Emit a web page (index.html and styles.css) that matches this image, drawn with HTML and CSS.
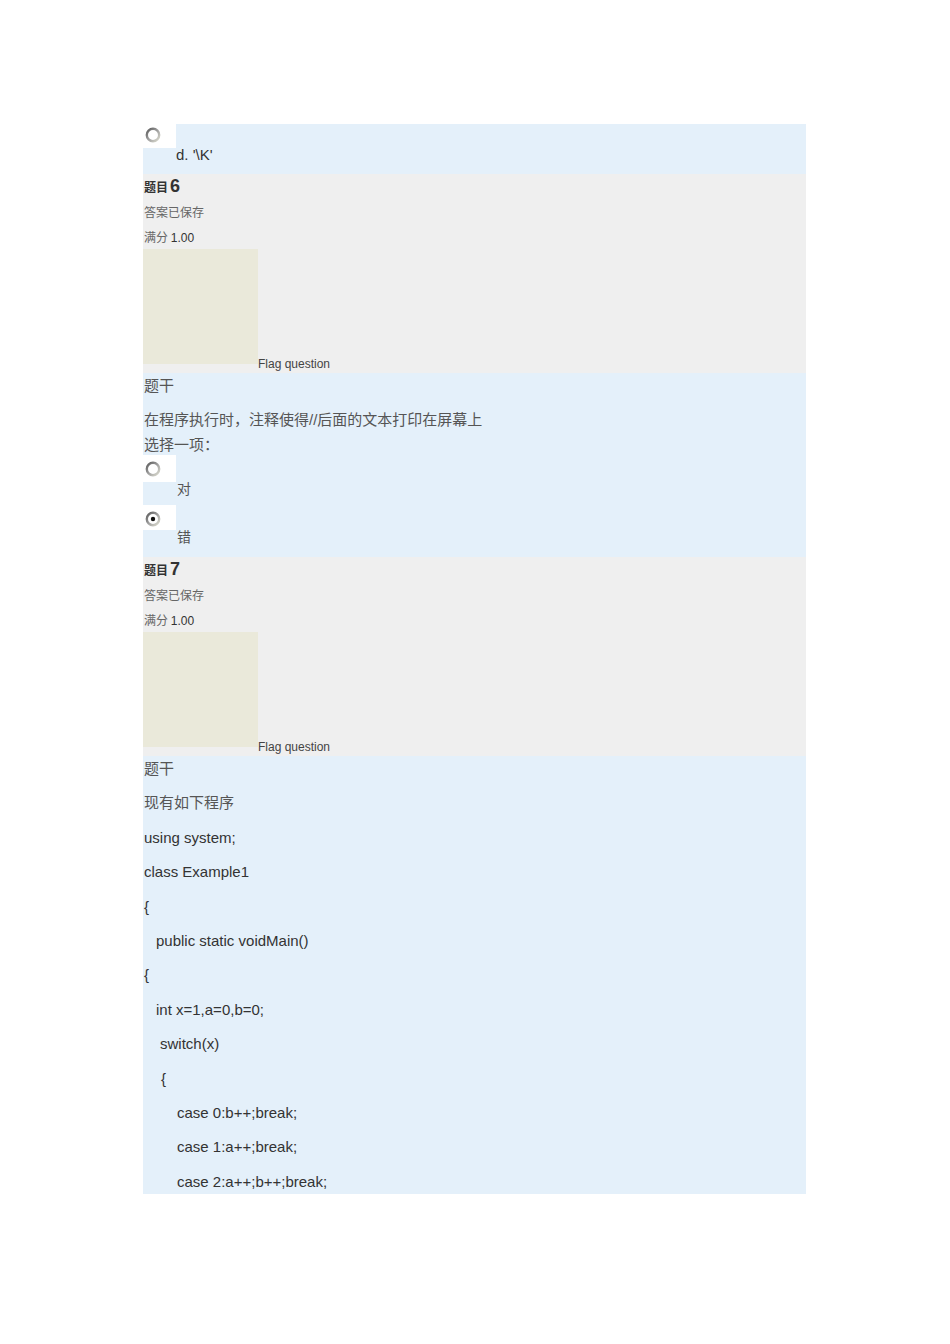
FILE: index.html
```html
<!DOCTYPE html>
<html lang="zh">
<head>
<meta charset="utf-8">
<title>Quiz</title>
<link rel="stylesheet" href="styles.css">
</head>
<body>
<div class="page">
  <div class="blue first">
    <div class="radio-box">
      <svg class="radio" viewBox="0 0 16 16" width="16" height="16"><defs><linearGradient id="g1" x1="0" y1="0" x2="1" y2="1"><stop offset="0" stop-color="#5a5a5a"/><stop offset="0.5" stop-color="#a0a0a0"/><stop offset="1" stop-color="#dcdcd0"/></linearGradient></defs><circle cx="8" cy="8" r="6.2" fill="#fff" stroke="url(#g1)" stroke-width="2.4"/></svg>
    </div>
    <div class="opt-text latin">d. '\K'</div>
  </div>

  <div class="grey">
    <div class="qno"><span class="qlabel">题目</span><span class="qnum">6</span></div>
    <div class="meta">答案已保存</div>
    <div class="meta">满分 <span class="latin dark">1.00</span></div>
    <div class="flag-row"><div class="flag-img"></div><span class="flag-text">Flag question</span></div>
  </div>

  <div class="blue q6">
    <div class="zh label">题干</div>
    <div class="zh qtext">在程序执行时，注释使得//后面的文本打印在屏幕上</div>
    <div class="zh choose">选择一项：</div>
    <div class="radio-box rb2">
      <svg class="radio" viewBox="0 0 16 16" width="16" height="16"><defs><linearGradient id="g2" x1="0" y1="0" x2="1" y2="1"><stop offset="0" stop-color="#5a5a5a"/><stop offset="0.5" stop-color="#a0a0a0"/><stop offset="1" stop-color="#dcdcd0"/></linearGradient></defs><circle cx="8" cy="8" r="6.2" fill="#fff" stroke="url(#g2)" stroke-width="2.4"/></svg>
    </div>
    <div class="zh opt-zh">对</div>
    <div class="radio-box rb3">
      <svg class="radio" viewBox="0 0 16 16" width="16" height="16"><defs><linearGradient id="g3" x1="0" y1="0" x2="1" y2="1"><stop offset="0" stop-color="#5a5a5a"/><stop offset="0.5" stop-color="#a0a0a0"/><stop offset="1" stop-color="#dcdcd0"/></linearGradient></defs><circle cx="8" cy="8" r="6.2" fill="#fff" stroke="url(#g3)" stroke-width="2.4"/><circle cx="8" cy="8" r="2.2" fill="#111"/></svg>
    </div>
    <div class="zh opt-zh">错</div>
  </div>

  <div class="grey">
    <div class="qno"><span class="qlabel">题目</span><span class="qnum">7</span></div>
    <div class="meta">答案已保存</div>
    <div class="meta">满分 <span class="latin dark">1.00</span></div>
    <div class="flag-row"><div class="flag-img"></div><span class="flag-text">Flag question</span></div>
  </div>

  <div class="blue q7">
    <p class="zh">题干</p>
    <p class="zh">现有如下程序</p>
    <p class="code">using system;</p>
    <p class="code">class Example1</p>
    <p class="code">{</p>
    <p class="code ind1">public static voidMain()</p>
    <p class="code">{</p>
    <p class="code ind1">int x=1,a=0,b=0;</p>
    <p class="code ind2">switch(x)</p>
    <p class="code ind2b">{</p>
    <p class="code ind3">case 0:b++;break;</p>
    <p class="code ind3">case 1:a++;break;</p>
    <p class="code ind3">case 2:a++;b++;break;</p>
  </div>
</div>
</body>
</html>
```

FILE: styles.css
```css
html, body {
  margin: 0;
  padding: 0;
  background: #ffffff;
}
.page {
  margin: 124px 0 0 143px;
  width: 663px;
  font-family: "Liberation Sans", Arial, "Noto Sans CJK SC", sans-serif;
  color: #333;
}
.latin {
  font-family: "Liberation Sans", Arial, sans-serif;
}
.zh {
  font-family: "Liberation Sans", "Noto Sans CJK SC", sans-serif;
  color: #555;
}
.dark { color: #333; }
.blue { background: #e4f0fa; }
.grey { background: #efefef; }

.radio-box {
  width: 33px;
  height: 24px;
  background: #ffffff;
  position: relative;
}
.radio {
  position: absolute;
  left: 2px;
  top: 3px;
}
.rb2 .radio, .rb3 .radio { top: 6px; }
.first { height: 50px; }
.opt-text {
  padding-left: 33px;
  font-size: 15px;
  line-height: 18px;
  margin-top: -2px;
  color: #333;
}

.qno {
  height: 25px;
  display: flex;
  align-items: center;
  padding-left: 1px;
}
.qlabel {
  font-family: "Noto Sans CJK SC", sans-serif;
  font-weight: bold;
  font-size: 12px;
  color: #333;
}
.qnum {
  font-family: "Liberation Sans", Arial, sans-serif;
  font-weight: bold;
  font-size: 18px;
  color: #333;
  margin-left: 2px;
}
.meta {
  font-family: "Noto Sans CJK SC", sans-serif;
  font-size: 12px;
  line-height: 25px;
  height: 25px;
  color: #666;
  padding-left: 1px;
}
.meta .latin { font-size: 12px; }
.flag-row {
  display: flex;
  align-items: flex-end;
  padding-bottom: 9px;
}
.flag-img {
  width: 115px;
  height: 115px;
  background: #eae9da;
}
.flag-text {
  font-size: 12px;
  line-height: 12px;
  color: #444;
  margin-bottom: -6px;
}

.q6 { padding-bottom: 13px; }
.q6 .zh { padding-left: 1px; }
.q6 .label {
  font-size: 15px;
  line-height: 26px;
}
.qtext {
  font-size: 15px;
  line-height: 20px;
  margin-top: 11px;
}
.choose {
  font-size: 15px;
  line-height: 20px;
  margin-top: 5px;
}
.rb2 { margin-top: 0; height: 27px; }
.rb3 { margin-top: 9px; height: 25px; }
.q6 .opt-zh {
  padding-left: 34px;
  font-size: 14px;
  line-height: 14px;
}

.q7 {
  padding: 4px 0 3px 1px;
}
.q7 p {
  margin: 0;
  font-size: 15px;
  line-height: 18px;
}
.q7 p + p { margin-top: 16.4px; }
.code { color: #333; }
.ind1 { padding-left: 12px; }
.ind2 { padding-left: 16px; }
.ind2b { padding-left: 17px; }
.ind3 { padding-left: 33px; }
```
